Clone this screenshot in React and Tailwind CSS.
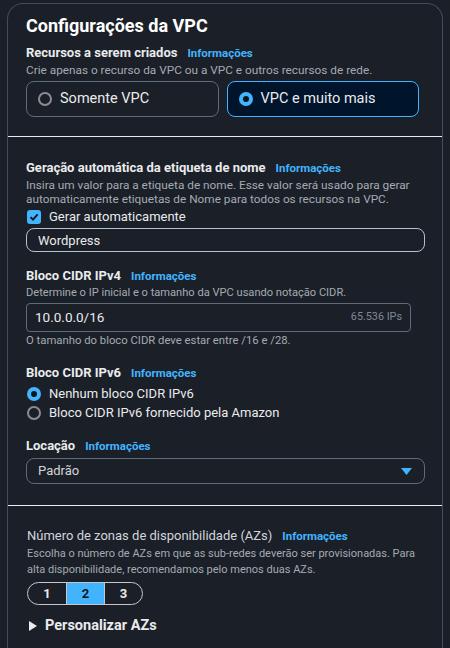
import React, { useState } from "react";

const Info = () => (
  <span className="ml-[10px] text-[11.5px] font-bold text-[#42b4ff]">Informações</span>
);

const Radio = ({ checked }) =>
  checked ? (
    <span className="inline-block w-[14px] h-[14px] rounded-full border-[4px] border-[#42b4ff] bg-[#0f141a] shrink-0" />
  ) : (
    <span className="inline-block w-[14px] h-[14px] rounded-full border-[2px] border-[#8c8c94] shrink-0" />
  );

const App = () => {
  const [resource, setResource] = useState("mais");
  const [ipv6, setIpv6] = useState("none");
  const [azs, setAzs] = useState(2);

  return (
    <div
      className="min-h-screen bg-[#1b1f27] pt-[3px] px-[7px] text-[#e9ebed]"
      style={{ fontFamily: "Roboto, 'Noto Sans', sans-serif" }}
    >
      <div className="rounded-t-[16px] border border-b-0 border-[#414d5c] bg-[#1b1f27] min-h-[650px]">
        {/* Section 1 */}
        <div className="pt-[9px] pb-[19px] pl-[18px] pr-[17px]">
          <h2 className="text-[18px] leading-[26px] font-bold text-white">Configurações da VPC</h2>
          <div className="mt-[5px] leading-[18px] text-[13px] font-bold">
            Recursos a serem criados
            <Info />
          </div>
          <p className="text-[11.8px] leading-[16px] text-[#a4abb3]">
            Crie apenas o recurso da VPC ou a VPC e outros recursos de rede.
          </p>
          <div className="mt-[3px] grid grid-cols-2 gap-[8px] w-[393px]">
            <button
              onClick={() => setResource("vpc")}
              className={
                "h-[36px] flex items-center gap-[8px] pl-[11px] rounded-[8px] border text-[14.5px] " +
                (resource === "vpc" ? "border-[#42b4ff] bg-[#00142b]" : "border-[#5f6b7a]")
              }
            >
              <Radio checked={resource === "vpc"} />
              Somente VPC
            </button>
            <button
              onClick={() => setResource("mais")}
              className={
                "h-[36px] flex items-center gap-[8px] pl-[11px] rounded-[8px] border text-[14.5px] " +
                (resource === "mais" ? "border-[#42b4ff] bg-[#00142b]" : "border-[#5f6b7a]")
              }
            >
              <Radio checked={resource === "mais"} />
              VPC e muito mais
            </button>
          </div>
        </div>

        <div className="h-px bg-[#e9ebed]" />

        {/* Section 2 */}
        <div className="pt-[22px] pb-[21px] pl-[18px] pr-[17px]">
          <div className="leading-[18px] text-[13px] font-bold">
            Geração automática da etiqueta de nome
            <Info />
          </div>
          <p className="mt-[1px] text-[11.8px] leading-[14px] text-[#a4abb3]">
            Insira um valor para a etiqueta de nome. Esse valor será usado para gerar automaticamente
            etiquetas de Nome para todos os recursos na VPC.
          </p>
          <label className="mt-[2px] flex items-center gap-[8px] text-[13px] leading-[18px]">
            <span className="w-[14px] h-[14px] ml-[1px] rounded-[3px] bg-[#42b4ff] flex items-center justify-center">
              <svg width="10" height="10" viewBox="0 0 10 10">
                <path d="M1.5 5.2 L4 7.6 L8.6 2.4" fill="none" stroke="#0f141a" strokeWidth="1.8" />
              </svg>
            </span>
            Gerar automaticamente
          </label>
          <input
            defaultValue="Wordpress"
            className="mt-[2px] w-full h-[24px] px-[11px] rounded-[8px] border border-[#b4c0cc] bg-transparent text-[13px] text-[#e9ebed] outline-none"
          />

          <div className="mt-[15px] leading-[18px] text-[13px] font-bold">
            Bloco CIDR IPv4
            <Info />
          </div>
          <p className="text-[11.1px] leading-[15px] text-[#a4abb3]">
            Determine o IP inicial e o tamanho da VPC usando notação CIDR.
          </p>
          <div className="mt-[3px] w-[385px] h-[29px] flex items-center justify-between px-[8px] rounded-[4px] border border-[#5f6b7a]">
            <span className="text-[13.5px]">10.0.0.0/16</span>
            <span className="text-[10.8px] text-[#7d8998]">65.536 IPs</span>
          </div>
          <p className="mt-[1px] text-[11.3px] leading-[16px] text-[#a4abb3]">
            O tamanho do bloco CIDR deve estar entre /16 e /28.
          </p>

          <div className="mt-[15px] leading-[18px] text-[13px] font-bold">
            Bloco CIDR IPv6
            <Info />
          </div>
          <div className="mt-[2px]">
            <div
              onClick={() => setIpv6("none")}
              className="flex items-center gap-[8px] h-[19px] text-[13px] ml-[1px]"
            >
              <Radio checked={ipv6 === "none"} />
              Nenhum bloco CIDR IPv6
            </div>
            <div
              onClick={() => setIpv6("amazon")}
              className="flex items-center gap-[8px] h-[19px] text-[13px] ml-[1px]"
            >
              <Radio checked={ipv6 === "amazon"} />
              Bloco CIDR IPv6 fornecido pela Amazon
            </div>
          </div>

          <div className="mt-[15px] leading-[18px] text-[13px] font-bold">
            Locação
            <Info />
          </div>
          <div className="mt-[3px] w-full h-[26px] flex items-center justify-between pl-[11px] pr-[12px] rounded-[8px] border border-[#5f6b7a]">
            <span className="text-[13px] text-[#d1d5db]">Padrão</span>
            <svg width="11" height="7" viewBox="0 0 11 7">
              <path d="M0 0 H11 L5.5 7 Z" fill="#42b4ff" />
            </svg>
          </div>
        </div>

        <div className="h-px bg-[#e9ebed]" />

        {/* Section 3 */}
        <div className="pt-[21px] pb-[20px] pl-[19px] pr-[17px]">
          <div className="leading-[18px] text-[13px] text-[#d1d5db]">
            Número de zonas de disponibilidade (AZs)
            <Info />
          </div>
          <p className="mt-[1px] text-[11px] leading-[16px] text-[#a4abb3]">
            Escolha o número de AZs em que as sub-redes deverão ser provisionadas. Para alta
            disponibilidade, recomendamos pelo menos duas AZs.
          </p>
          <div className="mt-[4px] inline-flex h-[23px] rounded-full border-[1.5px] border-[#c6c6cd] overflow-hidden">
            {[1, 2, 3].map((n) => (
              <button
                key={n}
                onClick={() => setAzs(n)}
                className={
                  "w-[38px] text-[13px] font-bold flex items-center justify-center " +
                  (n > 1 ? "border-l border-[#c6c6cd] " : "") +
                  (azs === n ? "bg-[#42b4ff] text-[#0f141a]" : "text-[#e9ebed]")
                }
              >
                {n}
              </button>
            ))}
          </div>
          <div className="mt-[11px] flex items-center gap-[8px] leading-[20px] text-[14.5px] font-bold">
            <svg width="8" height="10" viewBox="0 0 8 10" className="ml-[2px]">
              <path d="M0 0 L8 5 L0 10 Z" fill="#e9ebed" />
            </svg>
            Personalizar AZs
          </div>
        </div>
      </div>
    </div>
  );
};

export default App;
